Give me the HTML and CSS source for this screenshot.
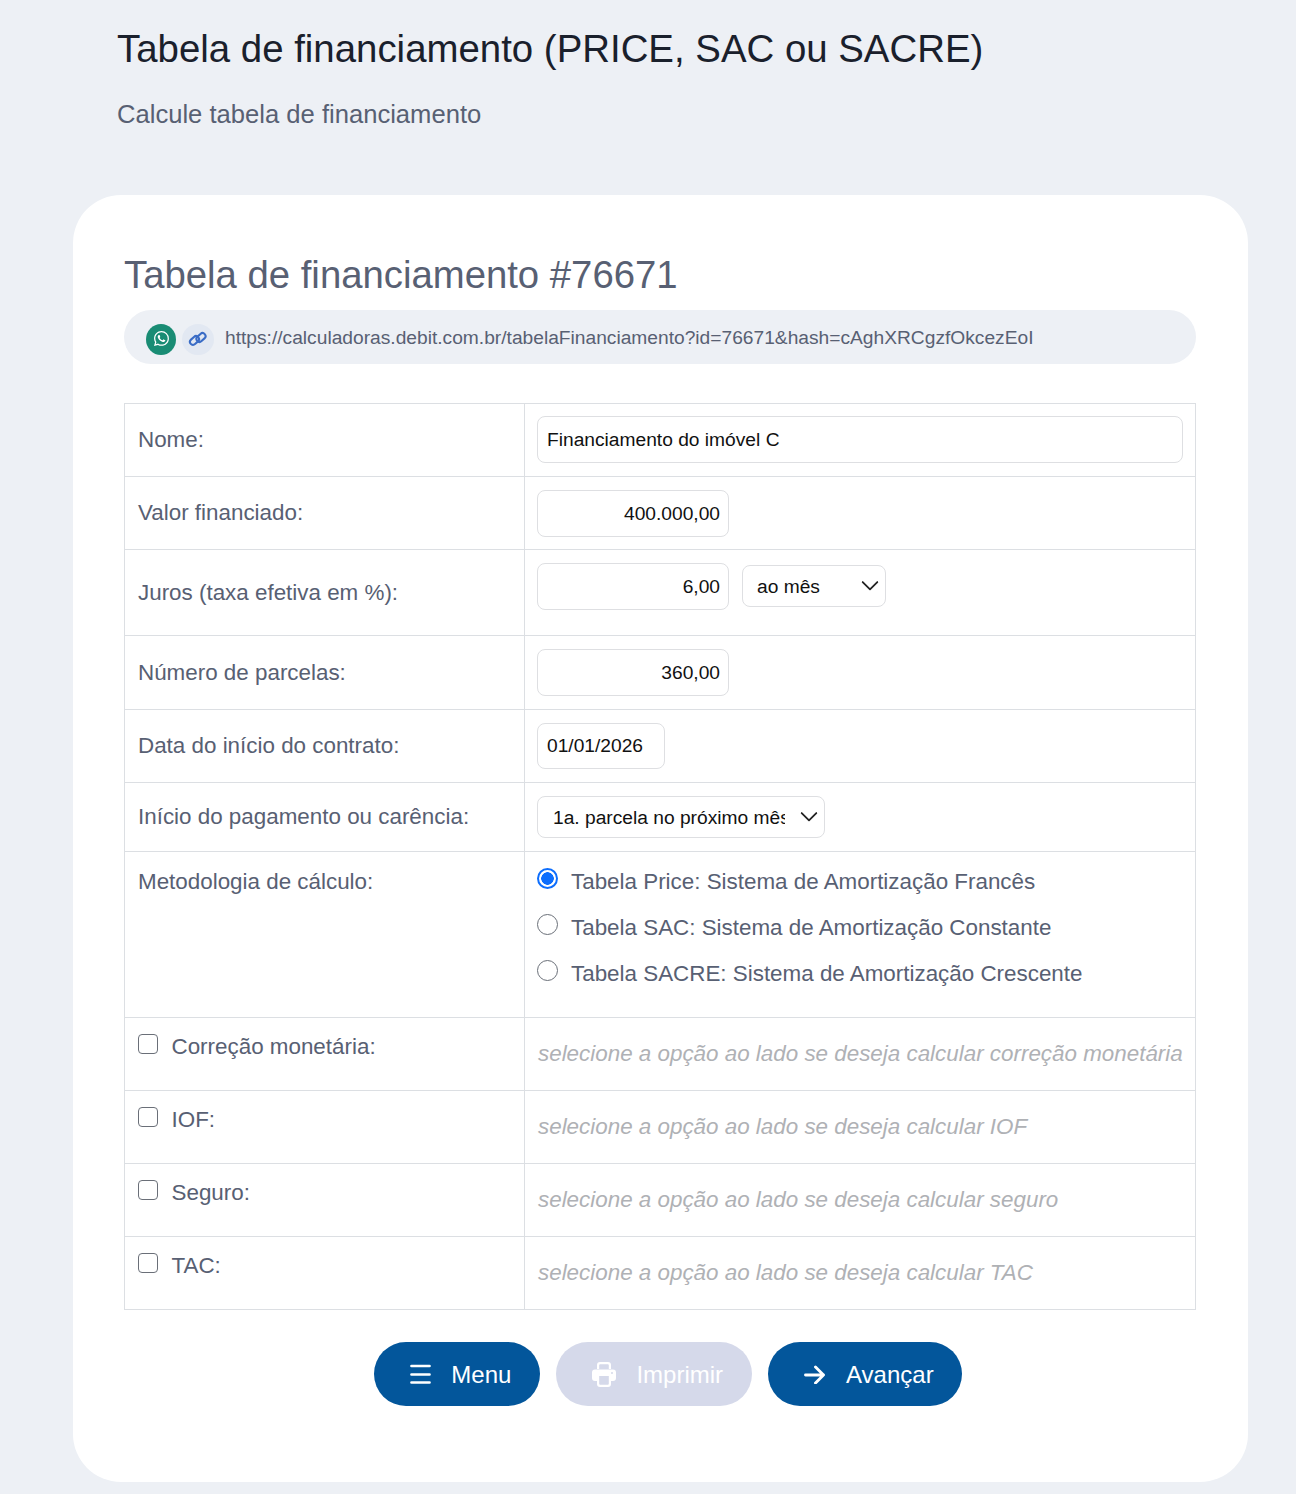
FILE: index.html
```html
<!DOCTYPE html>
<html lang="pt-BR">
<head>
    <meta charset="UTF-8">
    <meta name="viewport" content="width=device-width, initial-scale=1.0">
    <title>Tabela de financiamento</title>
    <link rel="stylesheet" href="styles.css">
</head>
<body>
    <header class="page-header">
        <h1>Tabela de financiamento (PRICE, SAC ou SACRE)</h1>
        <p>Calcule tabela de financiamento</p>
    </header>

    <main class="card">
        <h2>Tabela de financiamento #76671</h2>

        <div class="share-bar">
            <span class="share-icon whatsapp">
                <svg width="15" height="15" viewBox="0 0 16 16" fill="#fff"><path d="M13.601 2.326A7.854 7.854 0 0 0 7.994 0C3.627 0 .068 3.558.064 7.926c0 1.399.366 2.76 1.057 3.965L0 16l4.204-1.102a7.933 7.933 0 0 0 3.79.965h.004c4.368 0 7.926-3.558 7.93-7.93A7.898 7.898 0 0 0 13.6 2.326zM7.994 14.521a6.573 6.573 0 0 1-3.356-.92l-.24-.144-2.494.654.666-2.433-.156-.251a6.56 6.56 0 0 1-1.007-3.505c0-3.626 2.957-6.584 6.591-6.584a6.56 6.56 0 0 1 4.66 1.931 6.557 6.557 0 0 1 1.928 4.66c-.004 3.639-2.961 6.592-6.592 6.592zm3.615-4.934c-.197-.099-1.17-.578-1.353-.646-.182-.065-.315-.099-.445.099-.133.197-.513.646-.627.775-.114.133-.232.148-.43.05-.197-.1-.836-.308-1.592-.985-.59-.525-.985-1.175-1.103-1.372-.114-.198-.011-.304.088-.403.087-.088.197-.232.296-.346.1-.114.133-.198.198-.33.065-.134.034-.248-.015-.347-.05-.099-.445-1.076-.612-1.47-.16-.389-.323-.335-.445-.34-.114-.007-.247-.007-.38-.007a.729.729 0 0 0-.529.247c-.182.198-.691.677-.691 1.654 0 .977.71 1.916.81 2.049.098.133 1.394 2.132 3.383 2.992.47.205.84.326 1.129.418.475.152.904.129 1.246.08.38-.058 1.171-.48 1.338-.943.164-.464.164-.86.114-.943-.049-.084-.182-.133-.38-.232z"/></svg>
            </span>
            <span class="share-icon copy-link">
                <svg width="20" height="16" viewBox="0 0 20 16" fill="none" stroke="#3a6cc6" stroke-width="2.100"><rect x="1.500" y="6.500" width="10" height="6" rx="3" transform="rotate(-42 6.500 9.500)"/><rect x="8" y="3.500" width="10" height="6" rx="3" transform="rotate(-42 13 6.500)"/></svg>
            </span>
            <span class="share-url">https://calculadoras.debit.com.br/tabelaFinanciamento?id=76671&amp;hash=cAghXRCgzfOkcezEoI</span>
        </div>

        <table class="form-table">
            <colgroup>
                <col class="col-label">
                <col>
            </colgroup>
            <tr class="row-73">
                <td class="label-mid">Nome:</td>
                <td class="first-field"><input class="field field-full" type="text" value="Financiamento do imóvel C"></td>
            </tr>
            <tr class="row-73">
                <td class="label-mid">Valor financiado:</td>
                <td><input class="field field-num" type="text" value="400.000,00"></td>
            </tr>
            <tr class="row-86">
                <td class="label-mid">Juros (taxa efetiva em %):</td>
                <td>
                    <div class="field-group">
                        <input class="field field-num" type="text" value="6,00">
                        <select class="select select-period">
                            <option>ao mês</option>
                            <option>ao ano</option>
                        </select>
                    </div>
                </td>
            </tr>
            <tr class="row-74">
                <td class="label-mid">Número de parcelas:</td>
                <td><input class="field field-num" type="text" value="360,00"></td>
            </tr>
            <tr class="row-73">
                <td class="label-mid">Data do início do contrato:</td>
                <td><input class="field field-date" type="text" value="01/01/2026"></td>
            </tr>
            <tr class="row-69">
                <td class="label-mid">Início do pagamento ou carência:</td>
                <td>
                    <select class="select select-start">
                        <option>1a. parcela no próximo mês</option>
                    </select>
                </td>
            </tr>
            <tr class="row-166">
                <td class="label-top label-method">Metodologia de cálculo:</td>
                <td class="options">
                    <label class="option"><input class="radio" type="radio" name="metodo" checked>Tabela Price: Sistema de Amortização Francês</label>
                    <label class="option"><input class="radio" type="radio" name="metodo">Tabela SAC: Sistema de Amortização Constante</label>
                    <label class="option"><input class="radio" type="radio" name="metodo">Tabela SACRE: Sistema de Amortização Crescente</label>
                </td>
            </tr>
            <tr class="row-73">
                <td class="label-top"><label class="option"><input class="check" type="checkbox">Correção monetária:</label></td>
                <td class="hint">selecione a opção ao lado se deseja calcular correção monetária</td>
            </tr>
            <tr class="row-73">
                <td class="label-top"><label class="option"><input class="check" type="checkbox">IOF:</label></td>
                <td class="hint">selecione a opção ao lado se deseja calcular IOF</td>
            </tr>
            <tr class="row-73">
                <td class="label-top"><label class="option"><input class="check" type="checkbox">Seguro:</label></td>
                <td class="hint">selecione a opção ao lado se deseja calcular seguro</td>
            </tr>
            <tr class="row-73">
                <td class="label-top"><label class="option"><input class="check" type="checkbox">TAC:</label></td>
                <td class="hint">selecione a opção ao lado se deseja calcular TAC</td>
            </tr>
        </table>

        <div class="actions">
            <button class="btn btn-menu" type="button">
                <svg width="21" height="20" viewBox="0 0 21 20" fill="none" stroke="#fff" stroke-width="2.700" stroke-linecap="round"><path d="M1.500 2h18M1.500 10.500h18M1.500 18.500h18"/></svg>
                Menu
            </button>
            <button class="btn btn-print" type="button" disabled>
                <svg width="24" height="25" viewBox="0 0 24 25" fill="#fff"><path fill-rule="evenodd" d="M5 7V3a3 3 0 0 1 3-3h8a3 3 0 0 1 3 3v4h-2.200V3.200a1 1 0 0 0-1-1H8.200a1 1 0 0 0-1 1V7zM3 7.500h18a3 3 0 0 1 3 3V16a3 3 0 0 1-3 3h-2v3a3 3 0 0 1-3 3H8a3 3 0 0 1-3-3v-3H3a3 3 0 0 1-3-3v-5.500a3 3 0 0 1 3-3zM7.200 14v7.800a1 1 0 0 0 1 1h7.600a1 1 0 0 0 1-1V14zM19 11a1 1 0 1 0 2 0a1 1 0 1 0-2 0z"/></svg>
                Imprimir
            </button>
            <button class="btn btn-next" type="button">
                <svg width="21" height="20" viewBox="0 0 21 20" fill="none" stroke="#fff" stroke-width="2.900" stroke-linecap="round" stroke-linejoin="round"><path d="M1.500 11h18M11.500 3l8 8-8 8"/></svg>
                Avançar
            </button>
        </div>
    </main>
</body>
</html>
```

FILE: styles.css
```css
* {
    box-sizing: border-box;
}
body {
    margin: 0;
    background-color: #edf0f5;
    font-family: "Liberation Sans", Arial, sans-serif;
    color: #586073;
}

/* cabecalho */
.page-header {
    padding: 25px 0 0 117px;
    height: 195px;
}
.page-header h1 {
    margin: 0;
    font-size: 38.4px;
    line-height: 48px;
    font-weight: 400;
    color: #1a202c;
}
.page-header p {
    margin: 25px 0 0;
    font-size: 25.6px;
    line-height: 32px;
}

/* card principal */
.card {
    width: 1175px;
    height: 1287px;
    margin-left: 73px;
    padding: 56px 52px 0 51px;
    background-color: #fff;
    border-radius: 48px;
}
.card h2 {
    margin: 0;
    font-size: 38.3px;
    line-height: 48px;
    font-weight: 400;
}
.share-bar {
    display: flex;
    align-items: center;
    height: 54px;
    margin-top: 11px;
    padding-left: 22px;
    background-color: #edf0f5;
    border-radius: 27px;
}
.share-icon {
    display: flex;
    align-items: center;
    justify-content: center;
    height: 31px;
    margin-top: 5px;
    border-radius: 50%;
}
.share-icon svg {
    margin-top: -2px;
}
.whatsapp {
    width: 30px;
    background-color: #198c74;
}
.copy-link {
    width: 32px;
    margin-left: 6px;
    background-color: #e2e8f2;
}
.share-url {
    margin: 2px 0 0 11px;
    font-size: 19.2px;
}

/* tabela */
.form-table {
    width: 100%;
    margin-top: 39px;
    border-collapse: collapse;
    table-layout: fixed;
}
.col-label {
    width: 400px;
}
.form-table td {
    padding: 13px 12px 0;
    border: 1px solid #dcdfe3;
    vertical-align: top;
    font-size: 22.4px;
}
.row-73 { height: 73px; }
.row-86 { height: 86px; }
.row-74 { height: 74px; }
.row-69 { height: 69px; }
.row-166 { height: 166px; }

.form-table td.first-field {
    padding-top: 12px;
}
.form-table td.label-mid {
    padding: 0 12px 0 13px;
    vertical-align: middle;
}
.form-table td.label-top {
    padding: 16px 12px 0 13px;
}
.form-table td.label-method {
    padding-top: 17px;
}
.form-table td.options {
    padding-top: 17px;
}
.form-table td.hint {
    padding: 23px 5px 0 13px;
    color: #afb1b5;
    font-style: italic;
}

.field, .select {
    display: block;
    height: 47px;
    border: 1px solid #dedfe2;
    border-radius: 8px;
    background-color: #fff;
    font-family: inherit;
    font-size: 19.2px;
    color: #111;
}
.field {
    padding: 0 8px 0 9px;
}
.field-full {
    width: 100%;
}
.field-num {
    width: 192px;
    text-align: right;
}
.field-date {
    width: 128px;
    height: 46px;
}
.field-group {
    display: flex;
    align-items: flex-start;
    gap: 13px;
}
.select {
    height: 42px;
    appearance: none;
    padding: 0 39px 0 15px;
    background-image: url("data:image/svg+xml,%3Csvg xmlns='http://www.w3.org/2000/svg' viewBox='0 0 16 16'%3E%3Cpath fill='none' stroke='%23222' stroke-width='1.6' stroke-linecap='round' stroke-linejoin='round' d='M1.500 4.500 8 11l6.500-6.500'/%3E%3C/svg%3E");
    background-repeat: no-repeat;
    background-position: right 6px center;
    background-size: 18px 18px;
}
.select-period {
    width: 144px;
    margin-top: 2px;
    padding-left: 14px;
}
.select-start {
    width: 288px;
}

.option {
    display: flex;
    align-items: center;
    height: 26px;
    margin-bottom: 20px;
}
.radio, .check {
    flex: none;
    margin: 0 14px 6px 0;
    appearance: none;
    background-color: #fff;
    border: 1.5px solid #6a6f78;
}
.radio {
    width: 21px;
    height: 21px;
    margin: 0 13px 7px 0;
    border-radius: 50%;
}
.radio:checked {
    border: 2px solid #0d6efd;
    background: radial-gradient(circle, #0d6efd 0 6px, #fff 6.5px);
}
.check {
    width: 19.500px;
    height: 19.500px;
    border-radius: 4px;
}

/* botoes */
.actions {
    display: flex;
    justify-content: center;
    gap: 16px;
    margin-top: 32px;
    padding-left: 16px;
}
.btn {
    display: flex;
    align-items: center;
    gap: 20px;
    height: 64px;
    padding: 2px 29px 0 36px;
    border: none;
    border-radius: 32px;
    background-color: #03569b;
    color: #fff;
    font-family: inherit;
    font-size: 24px;
    cursor: pointer;
}
.btn svg {
    margin-top: -2px;
}
.btn-print {
    background-color: #d5d9ea;
}
.btn-next {
    gap: 21px;
    padding-right: 28px;
}
```
